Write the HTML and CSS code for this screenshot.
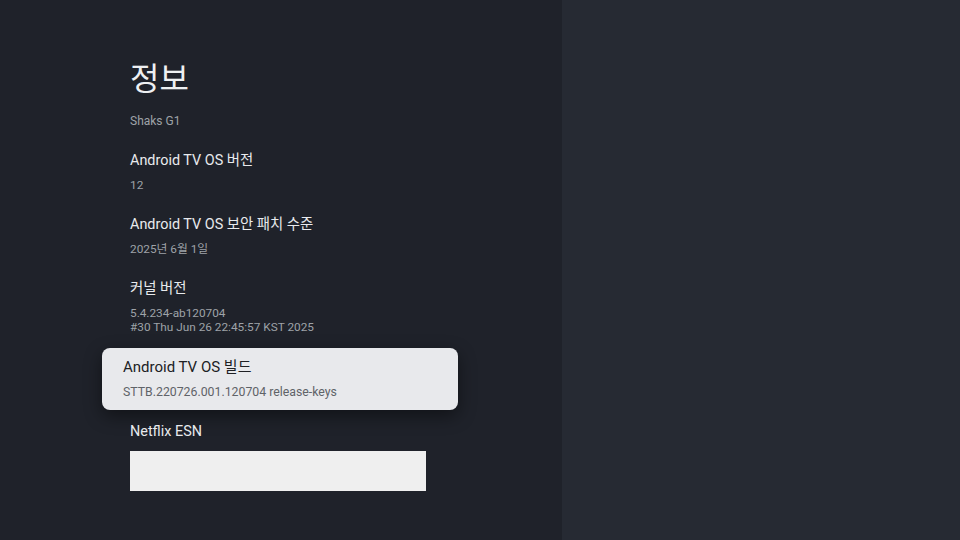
FILE: index.html
```html
<!DOCTYPE html>
<html lang="ko">
<head>
<meta charset="utf-8">
<link rel="stylesheet" href="styles.css">
</head>
<body>
<div class="screen">
  <main class="panel">
    <header class="head">
      <h1 class="title">정보</h1>
      <div class="device">Shaks G1</div>
    </header>
    <ul class="list">
      <li class="item">
        <div class="item-title">Android TV OS 버전</div>
        <div class="item-sub">12</div>
      </li>
      <li class="item">
        <div class="item-title">Android TV OS 보안 패치 수준</div>
        <div class="item-sub">2025년 6월 1일</div>
      </li>
      <li class="item">
        <div class="item-title">커널 버전</div>
        <div class="item-sub">5.4.234-ab120704<br>#30 Thu Jun 26 22:45:57 KST 2025</div>
      </li>
      <li class="item item-focused">
        <div class="item-title">Android TV OS 빌드</div>
        <div class="item-sub">STTB.220726.001.120704 release-keys</div>
      </li>
      <li class="item">
        <div class="item-title">Netflix ESN</div>
        <div class="esn-box"></div>
      </li>
    </ul>
  </main>
  <aside class="side"></aside>
</div>
</body>
</html>
```
FILE: styles.css
```css
* { box-sizing: border-box; }
html, body {
  margin: 0;
  padding: 0;
  width: 960px;
  height: 540px;
  overflow: hidden;
  font-family: Roboto, "Noto Sans CJK KR", sans-serif;
}
.screen {
  display: flex;
  width: 960px;
  height: 540px;
}
.panel {
  width: 562px;
  background: #1f222a;
  padding: 59px 0 0 102px;
}
.side {
  flex: 1;
  background: #262a33;
}
.head {
  padding-left: 28px;
}
.title {
  margin: 0;
  font-size: 32px;
  line-height: 40px;
  font-weight: 400;
  color: #eef0f2;
}
.device {
  margin-top: 14px;
  font-size: 12px;
  line-height: 16px;
  color: #9ea2a8;
}
.list {
  list-style: none;
  margin: 13px 0 0;
  padding: 0;
  width: 356px;
}
.item {
  padding: 9px 28px 14px;
  display: flex;
  flex-direction: column;
  gap: 7px;
}
.item-title {
  font-size: 14.4px;
  line-height: 20px;
  color: #e8eaed;
}
.item-sub {
  font-size: 11.8px;
  line-height: 14px;
  color: #9ea2a8;
}
.item-focused {
  background: #e8e9ec;
  border-radius: 8px;
  padding: 9px 21px 11px;
  gap: 8px;
  margin-bottom: 3px;
  box-shadow: 0 6px 18px rgba(0, 0, 0, 0.45);
}
.item-focused .item-title {
  font-size: 15px;
  color: #202124;
}
.item-focused .item-sub {
  font-size: 12.3px;
  color: #5f6368;
}
.esn-box {
  margin-top: 2px;
  width: 296px;
  height: 40px;
  background: #efefef;
}
```
